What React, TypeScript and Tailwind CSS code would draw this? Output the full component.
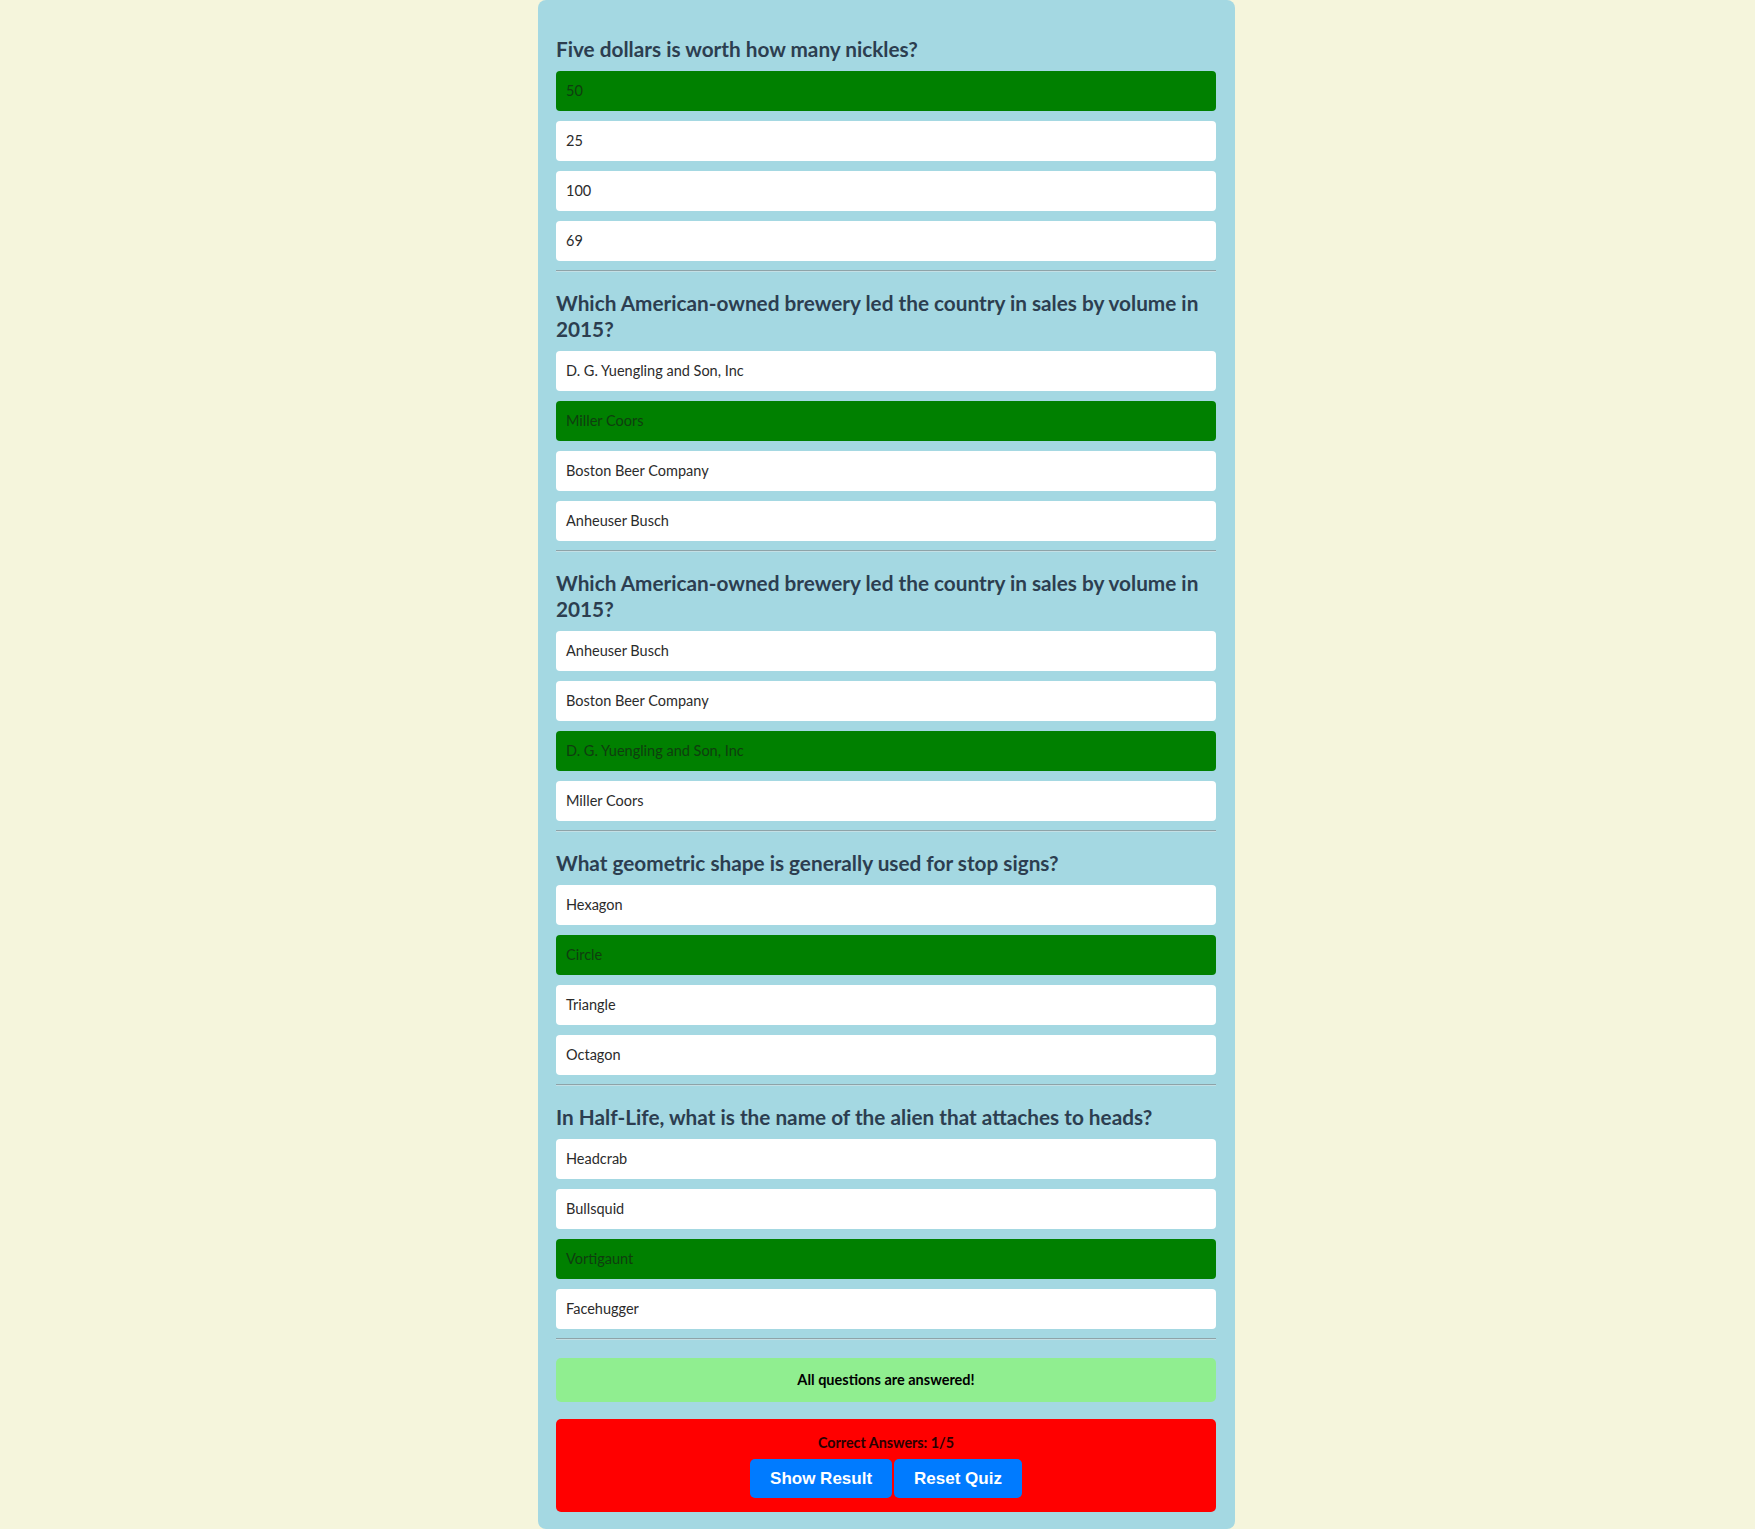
import React from 'react';

interface Question {
  text: string;
  options: string[];
  picked: number;
}

const questions: Question[] = [
  { text: 'Five dollars is worth how many nickles?', options: ['50', '25', '100', '69'], picked: 0 },
  {
    text: 'Which American-owned brewery led the country in sales by volume in 2015?',
    options: ['D. G. Yuengling and Son, Inc', 'Miller Coors', 'Boston Beer Company', 'Anheuser Busch'],
    picked: 1
  },
  {
    text: 'Which American-owned brewery led the country in sales by volume in 2015?',
    options: ['Anheuser Busch', 'Boston Beer Company', 'D. G. Yuengling and Son, Inc', 'Miller Coors'],
    picked: 2
  },
  {
    text: 'What geometric shape is generally used for stop signs?',
    options: ['Hexagon', 'Circle', 'Triangle', 'Octagon'],
    picked: 1
  },
  {
    text: 'In Half-Life, what is the name of the alien that attaches to heads?',
    options: ['Headcrab', 'Bullsquid', 'Vortigaunt', 'Facehugger'],
    picked: 2
  }
];

function QuestionBlock({ q, first }: { q: Question; first: boolean }) {
  return (
    <div>
      <h2 className={`${first ? 'mt-0' : 'mt-[18px]'} text-[20.75px] leading-[26px] font-bold text-[#2c3e50]`}>{q.text}</h2>
      <div className="mt-[9px] flex flex-col gap-[10px]">
        {q.options.map((opt, i) => (
          <div
            key={i}
            className={`h-10 flex items-center px-[10px] rounded-[4px] text-[14.5px] ${
              i === q.picked ? 'bg-[#008000] text-[#0f3d0f]' : 'bg-white text-[#2b2b2b]'
            }`}
          >
            {opt}
          </div>
        ))}
      </div>
      <hr className="mt-[9px] h-0 border-0 border-t border-t-[#8ea3a8] border-b border-b-[#c3dfe5]" />
    </div>
  );
}

export default function App() {
  return (
    <div className="min-h-screen bg-[#f5f5dc] flex justify-center pl-[18px]" style={{ fontFamily: 'Lato, "Noto Sans", sans-serif' }}>
      <div className="w-[697px] bg-[#a4d8e2] rounded-lg pt-9 pl-[18px] pr-[19px] pb-[16px]">
        {questions.map((q, i) => (
          <QuestionBlock key={i} q={q} first={i === 0} />
        ))}

        <div className="mt-[18px] h-11 rounded-[5px] bg-[#90ee90] flex items-center justify-center text-[14.5px] font-bold text-black">
          All questions are answered!
        </div>

        <div className="mt-[17px] rounded-[5px] bg-[#ff0000] pt-[14px] pb-[14px] flex flex-col items-center">
          <p className="text-[14.3px] leading-5 font-bold text-[#2a0000]">Correct Answers: 1/5</p>
          <div className="mt-[6px] flex gap-[2px]">
            <button
              className="h-[39px] px-[20px] rounded-[5px] bg-[#007bff] text-white text-[17px] font-bold"
              style={{ fontFamily: '"Liberation Sans", Arial, sans-serif' }}
            >
              Show Result
            </button>
            <button
              className="h-[39px] px-[20px] rounded-[5px] bg-[#007bff] text-white text-[17px] font-bold"
              style={{ fontFamily: '"Liberation Sans", Arial, sans-serif' }}
            >
              Reset Quiz
            </button>
          </div>
        </div>
      </div>
    </div>
  );
}
